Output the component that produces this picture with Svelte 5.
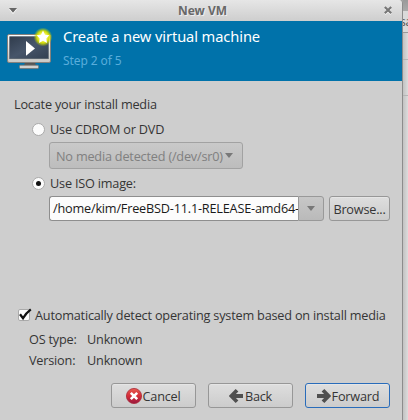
<script>
  const details = [
    { label: 'OS type:', value: 'Unknown' },
    { label: 'Version:', value: 'Unknown' }
  ];
</script>

<div class="screen">
  <section class="dialog">
    <header class="titlebar">
      <svg class="menu" width="8" height="6" viewBox="0 0 8 6"><path d="M0 1.3H8L4 6Z" fill="#fff" /><path d="M0 0H8L4 4.7Z" fill="#666" /></svg>
      <span class="title">New VM</span>
      <svg class="close" width="8" height="9" viewBox="0 0 8 9">
        <path d="M1 2L7 8M7 2L1 8" stroke="#fff" stroke-width="2" />
        <path d="M.8 1L7.2 7.2M7.2 1L.8 7.2" stroke="#777" stroke-width="2.2" />
      </svg>
    </header>

    <div class="banner">
      <svg class="monitor" width="48" height="44" viewBox="0 0 48 44">
        <defs>
          <linearGradient id="frame" x2="0" y2="1"><stop stop-color="#fff" /><stop offset="1" stop-color="#c8c8c5" /></linearGradient>
          <linearGradient id="glass" x2="1" y2="1"><stop stop-color="#303c4c" /><stop offset=".5" stop-color="#47556a" /><stop offset="1" stop-color="#334052" /></linearGradient>
          <radialGradient id="glow"><stop offset=".3" stop-color="#fffb70" /><stop offset=".65" stop-color="#d8e000" stop-opacity=".95" /><stop offset="1" stop-color="#b8d000" stop-opacity="0" /></radialGradient>
        </defs>
        <path d="M18 34H28L29 38H17Z" fill="#555" />
        <rect x="12.5" y="37.2" width="19" height="3.4" rx="1" fill="#d0d0ce" stroke="#77736f" stroke-width=".8" />
        <rect x=".5" y="6.5" width="43" height="28" rx="1.5" fill="url(#frame)" stroke="#85817d" />
        <rect x="2.7" y="8.7" width="38.6" height="22" fill="url(#glass)" stroke="#525c68" stroke-width=".7" />
        <path d="M19 13L28 20.4L19 27.8Z" fill="#fff" />
        <circle cx="36" cy="9" r="9.4" fill="url(#glow)" />
        <path d="M36 2.5L38 6.7L42.4 7.3L39.3 10.4L40 15L36 12.8L32 15L32.7 10.4L29.6 7.3L34 6.7Z" fill="#fff" />
      </svg>
      <div class="heading">
        <div class="main">Create a new virtual machine</div>
        <div class="step">Step 2 of 5</div>
      </div>
    </div>

    <main>
      <div class="locate">Locate your install media</div>
      <div class="choice first"><i class="radio"></i><span>Use CDROM or DVD</span></div>
      <div class="combo"><span>No media detected (/dev/sr0)</span><i class="down"></i></div>
      <div class="choice second"><i class="radio on"></i><span>Use ISO image:</span></div>
      <div class="iso">
        <div class="entry"><span>/home/kim/FreeBSD-11.1-RELEASE-amd64-</span></div>
        <div class="drop"><i class="down"></i></div>
        <div class="button browse"><span>Browse...</span></div>
      </div>

      <div class="detect">
        <svg width="15" height="14" viewBox="0 0 15 14">
          <rect x=".5" y="1.5" width="11" height="11" rx="1.5" fill="#fcfcfc" stroke="#aaa" />
          <path d="M2 6.2L5 10.2Q8 5 12.8 1.3" fill="none" stroke="#111" stroke-width="2.3" />
        </svg>
        <span>Automatically detect operating system based on install media</span>
      </div>
      {#each details as item}
        <div class="detail"><span class="key">{item.label}</span><span>{item.value}</span></div>
      {/each}
      <footer>
        <div class="button">
          <svg width="16" height="16" viewBox="0 0 16 16">
            <defs><linearGradient id="red" x2="0" y2="1"><stop stop-color="#e65b50" /><stop offset=".5" stop-color="#d62d38" /><stop offset="1" stop-color="#971840" /></linearGradient></defs>
            <circle cx="8" cy="8" r="7.6" fill="url(#red)" stroke="#a92a38" stroke-width=".8" />
            <path d="M4.8 4.8L11.2 11.2M11.2 4.8L4.8 11.2" stroke="#fff" stroke-width="2.6" />
          </svg><span>Cancel</span>
        </div>
        <div class="button">
          <svg width="16" height="16" viewBox="0 0 16 16"><path d="M8 2.2L2.4 8L8 13.8M3 8H14" fill="none" stroke="#505050" stroke-width="3.8" /></svg><span>Back</span>
        </div>
        <div class="button focused">
          <svg width="16" height="16" viewBox="0 0 16 16"><path d="M7 2.2L12.6 8L7 13.8M12 8H1" fill="none" stroke="#505050" stroke-width="3.8" /></svg><span>Forward</span>
        </div>
      </footer>
    </main>
  </section>
  <aside>
    <div class="cap"></div>
    <div class="tab"><span>sa</span></div>
    <div class="line one"></div>
    <div class="line two"></div>
    <div class="rest"></div>
  </aside>
</div>

<style>
  :global(body) { margin: 0; background: #cecece; }
  .screen { width: 408px; height: 420px; display: flex; overflow: hidden; font: 12.7px/20px "Open Sans", "Noto Sans", sans-serif; letter-spacing: -.2px; color: #353535; background: #a5a5a5; white-space: nowrap; }
  .screen * { box-sizing: border-box; }
  svg { display: block; flex: none; overflow: visible; }
  .dialog { width: 403px; flex: none; border-right: 1px solid #8c8c8c; border-top-right-radius: 4px; overflow: hidden; background: #cecece; }
  .titlebar { height: 21px; padding: 0 10px 0 9px; display: flex; align-items: center; justify-content: space-between; background: linear-gradient(#e6e6e6, #cecece); }
  .title { font: 700 12px/20px "Noto Sans", sans-serif; letter-spacing: 0; margin-left: 4px; color: #686868; text-shadow: 1px 1px #eee; }
  .close { margin-right: 0; }
  .banner { height: 60px; background: #0072aa; display: flex; padding: 6px 0 0 7px; }
  .monitor { margin-top: 1px; }
  .heading { margin-left: 8px; font-family: "Noto Sans", sans-serif; letter-spacing: 0; }
  .main { font-size: 14.67px; line-height: 19px; letter-spacing: -.1px; color: #fff; }
  .step { margin-top: 5px; font-size: 12px; line-height: 20px; letter-spacing: -.1px; color: #59addb; }
  main { padding-top: 13px; }
  .locate { padding-left: 14px; }
  .choice { display: flex; align-items: center; height: 20px; padding-left: 32px; }
  .choice span { margin-left: 6px; }
  .first { margin-top: 5px; }
  .radio { width: 13px; height: 13px; border-radius: 50%; border: 1px solid #aaa; background: #fcfcfc; display: flex; align-items: center; justify-content: center; }
  .radio.on::after { content: ''; width: 5px; height: 5px; border-radius: 50%; background: #111; }
  .choice .radio + span { margin-left: 5px; }
  .combo { margin: 3px 0 0 49px; width: 194px; height: 27px; border: 1px solid #a2a2a2; border-radius: 3px; display: flex; align-items: center; justify-content: space-between; padding: 0 9px 0 6px; color: #808080; background: linear-gradient(#c9c9c9, #bdbdbd); }
  .down { flex: none; width: 8px; height: 5px; background: #787878; clip-path: polygon(0 0, 100% 0, 50% 100%); }
  .second { margin-top: 4px; }
  .iso { display: flex; margin: 3px 0 0 49px; height: 25px; }
  .entry { width: 249px; border: 1px solid #8e8e8e; border-right: 0; border-radius: 3px 0 0 3px; background: #fcfcfc; color: #1a1a1a; line-height: 23px; padding-left: 3px; }
  .drop { width: 26px; border: 1px solid #999; border-radius: 0 3px 3px 0; background: linear-gradient(#c7c7c7, #bababa); display: flex; align-items: center; justify-content: center; }
  .button { width: 85px; height: 25px; border: 1px solid #979797; border-radius: 3px; background: linear-gradient(#dedede, #cccccc); box-shadow: inset 0 1px #e5e5e5; display: flex; align-items: center; justify-content: center; }
  .browse { width: 61px; margin-left: 5px; }
  .detect { display: flex; align-items: center; margin: 84px 0 4px 18px; height: 20px; }
  .detect span { margin-left: 2px; }
  .detail { display: flex; height: 21px; padding-left: 29px; }
  .key { width: 58px; }
  footer { display: flex; gap: 12px; margin: 12px 0 0 111px; }
  .focused { border-color: #296cba; }
  aside { width: 5px; flex: none; background: linear-gradient(90deg, #c2c2c2, #dcdcdc); }
  .cap { height: 11px; background: linear-gradient(#9a9a9a, #aaa); }
  .tab { height: 22px; line-height: 22px; font-size: 12px; color: #555; border-bottom: 1px solid #999; overflow: hidden; background: #dadada; }
  .tab span { margin-left: -3px; }
  .line { height: 27px; border-bottom: 1px solid #b5b5b5; }
  .two { height: 36px; }
</style>
